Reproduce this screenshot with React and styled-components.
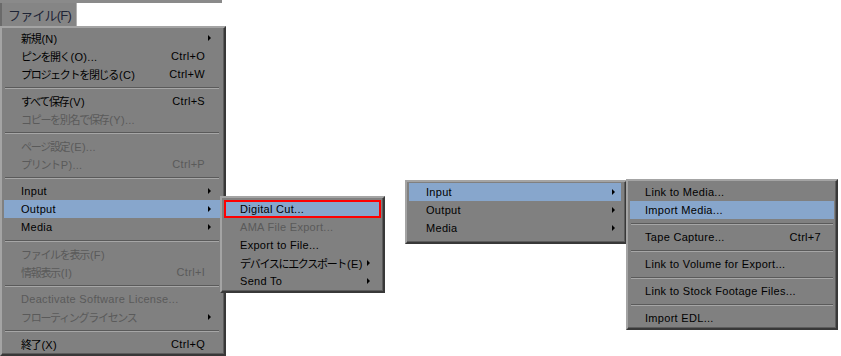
import styled, { createGlobalStyle } from 'styled-components';

const GlobalStyle = createGlobalStyle`
  html, body {
    margin: 0;
    background: #ffffff;
  }
  body {
    font-family: "Liberation Sans", "Noto Sans CJK JP", sans-serif;
  }
`;

const fileMenu = [
  { label: '新規(N)', arrow: true },
  { label: 'ピンを開く(O)...', shortcut: 'Ctrl+O' },
  { label: 'プロジェクトを閉じる(C)', shortcut: 'Ctrl+W' },
  { sep: true },
  { label: 'すべて保存(V)', shortcut: 'Ctrl+S' },
  { label: 'コピーを別名で保存(Y)...', disabled: true },
  { sep: true },
  { label: 'ページ設定(E)...', disabled: true },
  { label: 'プリントP)...', shortcut: 'Ctrl+P', disabled: true },
  { sep: true },
  { label: 'Input', arrow: true },
  { label: 'Output', arrow: true, active: true, sub: 'output' },
  { label: 'Media', arrow: true },
  { sep: true },
  { label: 'ファイルを表示(F)', disabled: true },
  { label: '情報表示(I)', shortcut: 'Ctrl+I', disabled: true },
  { sep: true },
  { label: 'Deactivate Software License...', disabled: true },
  { label: 'フローティングライセンス', arrow: true, disabled: true },
  { sep: true },
  { label: '終了(X)', shortcut: 'Ctrl+Q' },
];

const outputMenu = [
  { label: 'Digital Cut...', active: true, outlined: true },
  { label: 'AMA File Export...', disabled: true },
  { label: 'Export to File...' },
  { label: 'デバイスにエクスポート(E)', arrow: true },
  { label: 'Send To', arrow: true },
];

const mainMenu = [
  { label: 'Input', arrow: true, active: true, sub: 'input' },
  { label: 'Output', arrow: true },
  { label: 'Media', arrow: true },
];

const inputMenu = [
  { label: 'Link to Media...' },
  { label: 'Import Media...', active: true },
  { sep: true },
  { label: 'Tape Capture...', shortcut: 'Ctrl+7' },
  { sep: true },
  { label: 'Link to Volume for Export...' },
  { sep: true },
  { label: 'Link to Stock Footage Files...' },
  { sep: true },
  { label: 'Import EDL...' },
];

const submenus = {
  output: { items: outputMenu, width: 165, arrowRight: 11, padRight: 15, padLeft: 16 },
  input: { items: inputMenu, width: 212, arrowRight: 9, padRight: 13, padLeft: 15 },
};

// split a label into runs of CJK and latin text, they get different tracking
const splitRuns = (text) => text.match(/[\u3040-\u30ff\u4e00-\u9fff]+|[^\u3040-\u30ff\u4e00-\u9fff]+/g);
const isCjk = (run) => /[\u3040-\u30ff\u4e00-\u9fff]/.test(run);

function MenuItems({ items, arrowRight = 9, padRight = 15, padLeft = 17, subOffset = 0 }) {
  return items.map((item, i) => {
    if (item.sep) return <Separator key={i} />;
    const sub = item.sub && submenus[item.sub];
    return (
      <Row
        key={i}
        $active={item.active}
        $outlined={item.outlined}
        $disabled={item.disabled}
        $padRight={padRight}
        $padLeft={padLeft}
      >
        <Label>
          {splitRuns(item.label).map((run, j) => (
            <Run key={j} $cjk={isCjk(run)}>
              {run}
            </Run>
          ))}
        </Label>
        {item.shortcut && <Shortcut>{item.shortcut}</Shortcut>}
        {item.arrow && <Arrow $right={arrowRight} />}
        {sub && (
          <Submenu $offset={subOffset} $width={sub.width}>
            <MenuItems
              items={sub.items}
              arrowRight={sub.arrowRight}
              padRight={sub.padRight}
              padLeft={sub.padLeft}
            />
          </Submenu>
        )}
      </Row>
    );
  });
}

export default function App() {
  return (
    <>
      <GlobalStyle />
      <Page>
        <LeftColumn>
          <TitleStrip />
          <MenuTitle>ファイル(F)</MenuTitle>
          <Menu $width={226} $right={4}>
            <MenuItems items={fileMenu} />
          </Menu>
        </LeftColumn>
        <RightGroup>
          <Menu $width={222} $right={4} $bottom={5}>
            <MenuItems items={mainMenu} arrowRight={6} subOffset={5} />
          </Menu>
        </RightGroup>
      </Page>
    </>
  );
}

const Page = styled.div`
  width: 841px;
  height: 356px;
  display: flex;
  align-items: flex-start;
  overflow: hidden;
`;

const LeftColumn = styled.div`
  width: 226px;
  display: flex;
  flex-direction: column;
`;

const TitleStrip = styled.div`
  width: 222px;
  height: 3px;
  background: #8a8a8a;
`;

const MenuTitle = styled.div`
  box-sizing: border-box;
  width: 77px;
  height: 23px;
  padding-left: 6px;
  display: flex;
  align-items: center;
  white-space: nowrap;
  background: #858585;
  border-left: 2px solid #6a6a6a;
  border-right: 1px solid #b0b0b0;
  color: #1e2436;
  font-size: 13px;
  letter-spacing: -0.8px;
`;

const Menu = styled.div`
  box-sizing: border-box;
  width: ${(p) => p.$width}px;
  padding: 1px ${(p) => p.$right || 2}px ${(p) => p.$bottom || 1}px 2px;
  background: #808080;
  border-top: 2px solid #a4a4a4;
  border-left: 2px solid #a4a4a4;
  border-right: 2px solid #383838;
  border-bottom: 2px solid #383838;
  box-shadow: inset -1px -1px 0 #5c5c5c;
  display: flex;
  flex-direction: column;
`;

const Submenu = styled(Menu)`
  position: absolute;
  top: -4px;
  left: calc(100% + ${(p) => p.$offset}px);
  padding: 2px 2px 1px 2px;
  z-index: 2;
`;

const Row = styled.div`
  position: relative;
  box-sizing: border-box;
  height: 18px;
  padding: 0 ${(p) => p.$padRight}px 0 ${(p) => p.$padLeft}px;
  display: flex;
  align-items: center;
  white-space: nowrap;
  font-size: 11px;
  color: ${(p) => (p.$disabled ? '#5a5a5a' : '#000000')};
  background: ${(p) => (p.$active ? '#87a6cc' : 'transparent')};
  outline: ${(p) => (p.$outlined ? '2px solid #ff0000' : 'none')};
  outline-offset: -2px;
`;

const Label = styled.span`
  flex: 1;
`;

const Run = styled.span`
  letter-spacing: ${(p) => (p.$cjk ? '-1.3px' : '0.3px')};
  margin-right: ${(p) => (p.$cjk ? '1px' : '0')};
`;

const Shortcut = styled.span`
  letter-spacing: 0.3px;
`;

const Arrow = styled.span`
  position: absolute;
  right: ${(p) => p.$right}px;
  top: 6px;
  width: 0;
  height: 0;
  border-top: 3px solid transparent;
  border-bottom: 3px solid transparent;
  border-left: 3px solid #000000;
`;

const Separator = styled.div`
  height: 9px;
  margin: 0 1px;
  display: flex;
  flex-direction: column;
  justify-content: center;

  &::before {
    content: '';
    height: 1px;
    background: #5a5a5a;
  }
  &::after {
    content: '';
    height: 1px;
    background: #a6a6a6;
  }
`;

const RightGroup = styled.div`
  margin-left: 179px;
  margin-top: 180px;
`;
